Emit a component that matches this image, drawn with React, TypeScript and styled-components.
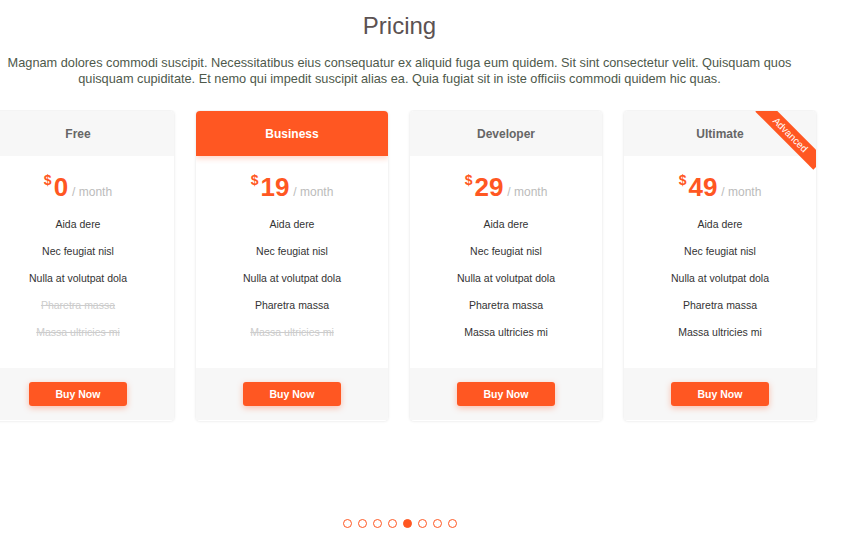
import React from "react";
import styled, { createGlobalStyle } from "styled-components";

const ORANGE = "#ff5722";

const GlobalStyle = createGlobalStyle`
  html, body { margin: 0; padding: 0; background: #ffffff; }
  body { font-family: "Liberation Sans", Arial, sans-serif; }
  * { box-sizing: border-box; }
`;

const Page = styled.section`
  width: 857px;
  padding-top: 10px;
  display: flex;
  flex-direction: column;
`;

const Heading = styled.header`
  width: 799px;
  display: flex;
  flex-direction: column;
  align-items: center;
`;

const Title = styled.h2`
  margin: 0;
  font-size: 24px;
  font-weight: 400;
  line-height: 31px;
  color: #5c5252;
  text-align: center;
`;

const Intro = styled.p`
  margin: 14px 0 0;
  font-size: 12.75px;
  line-height: 16px;
  color: #4e594b;
  text-align: center;
`;

const Viewport = styled.div`
  width: 100%;
  margin-top: 23px;
  padding: 1px 0 4px;
  overflow: hidden;
`;

const Track = styled.div`
  display: flex;
  gap: 22px;
  margin-left: -18px;
`;

const Card = styled.div`
  position: relative;
  flex: 0 0 192px;
  width: 192px;
  height: 310px;
  background: #ffffff;
  border-radius: 4px;
  box-shadow: 0 0 3px rgba(0, 0, 0, 0.13);
  overflow: hidden;
  display: flex;
  flex-direction: column;
`;

const Header = styled.div<{ $featured?: boolean }>`
  height: 45px;
  flex: 0 0 45px;
  display: flex;
  align-items: center;
  justify-content: center;
  font-size: 12px;
  font-weight: 700;
  color: ${(p) => (p.$featured ? "#ffffff" : "#666666")};
  background: ${(p) => (p.$featured ? ORANGE : "#f7f7f7")};
  box-shadow: ${(p) => (p.$featured ? "0 3px 5px rgba(255, 87, 34, 0.22)" : "none")};
  position: relative;
  z-index: 1;
`;

const Price = styled.div`
  margin-top: 15px;
  height: 32px;
  display: flex;
  align-items: baseline;
  justify-content: center;
  color: ${ORANGE};
  font-weight: 700;
`;

const Currency = styled.span`
  font-size: 14px;
  line-height: 16px;
  align-self: flex-start;
  margin-top: 1px;
  margin-right: 2px;
`;

const Amount = styled.span`
  font-size: 26px;
  line-height: 32px;
`;

const Period = styled.span`
  font-size: 12px;
  font-weight: 400;
  color: #bbbbbb;
  margin-left: 4px;
`;

const Features = styled.ul`
  list-style: none;
  margin: 8px 0 0;
  padding: 0;
  flex: 1;
`;

const Feature = styled.li<{ $off?: boolean }>`
  font-size: 10.5px;
  line-height: 27px;
  text-align: center;
  color: ${(p) => (p.$off ? "#cccccc" : "#333333")};
  text-decoration: ${(p) => (p.$off ? "line-through" : "none")};
`;

const Footer = styled.div`
  height: 52px;
  flex: 0 0 52px;
  margin-bottom: 1px;
  background: #f7f7f7;
  display: flex;
  align-items: center;
  justify-content: center;
`;

const BuyButton = styled.button`
  width: 98px;
  height: 24px;
  border: 0;
  border-radius: 3px;
  background: ${ORANGE};
  color: #ffffff;
  font-family: inherit;
  font-size: 10.5px;
  font-weight: 700;
  box-shadow: 0 2px 6px rgba(255, 87, 34, 0.35);
  cursor: pointer;
`;

const Ribbon = styled.div`
  position: absolute;
  top: 16px;
  right: -15px;
  width: 82px;
  height: 16px;
  line-height: 16px;
  background: ${ORANGE};
  color: #ffffff;
  font-size: 10px;
  text-align: center;
  transform: rotate(45deg);
  z-index: 2;
`;

const Pager = styled.div`
  width: 799px;
  margin-top: 94px;
  display: flex;
  justify-content: center;
  gap: 6px;
`;

const Dot = styled.span<{ $active?: boolean }>`
  width: 9px;
  height: 9px;
  border-radius: 50%;
  border: 1px solid ${ORANGE};
  background: ${(p) => (p.$active ? ORANGE : "transparent")};
`;

type Plan = {
  name: string;
  price: number;
  featured?: boolean;
  ribbon?: string;
  off: number;
};

const FEATURES = [
  "Aida dere",
  "Nec feugiat nisl",
  "Nulla at volutpat dola",
  "Pharetra massa",
  "Massa ultricies mi",
];

const PLANS: Plan[] = [
  { name: "Free", price: 0, off: 2 },
  { name: "Business", price: 19, featured: true, off: 1 },
  { name: "Developer", price: 29, off: 0 },
  { name: "Ultimate", price: 49, ribbon: "Advanced", off: 0 },
];

export default function App() {
  return (
    <>
      <GlobalStyle />
      <Page>
        <Heading>
          <Title>Pricing</Title>
          <Intro>
            Magnam dolores commodi suscipit. Necessitatibus eius consequatur ex aliquid fuga eum quidem. Sit sint
            consectetur velit. Quisquam quos quisquam cupiditate. Et nemo qui impedit suscipit alias ea. Quia fugiat
            sit in iste officiis commodi quidem hic quas.
          </Intro>
        </Heading>
        <Viewport>
          <Track>
            {PLANS.map((plan) => (
              <Card key={plan.name}>
                <Header $featured={plan.featured}>{plan.name}</Header>
                {plan.ribbon && <Ribbon>{plan.ribbon}</Ribbon>}
                <Price>
                  <Currency>$</Currency>
                  <Amount>{plan.price}</Amount>
                  <Period>/ month</Period>
                </Price>
                <Features>
                  {FEATURES.map((f, i) => (
                    <Feature key={f} $off={i >= FEATURES.length - plan.off}>
                      {f}
                    </Feature>
                  ))}
                </Features>
                <Footer>
                  <BuyButton>Buy Now</BuyButton>
                </Footer>
              </Card>
            ))}
          </Track>
        </Viewport>
        <Pager>
          {Array.from({ length: 8 }).map((_, i) => (
            <Dot key={i} $active={i === 4} />
          ))}
        </Pager>
      </Page>
    </>
  );
}
